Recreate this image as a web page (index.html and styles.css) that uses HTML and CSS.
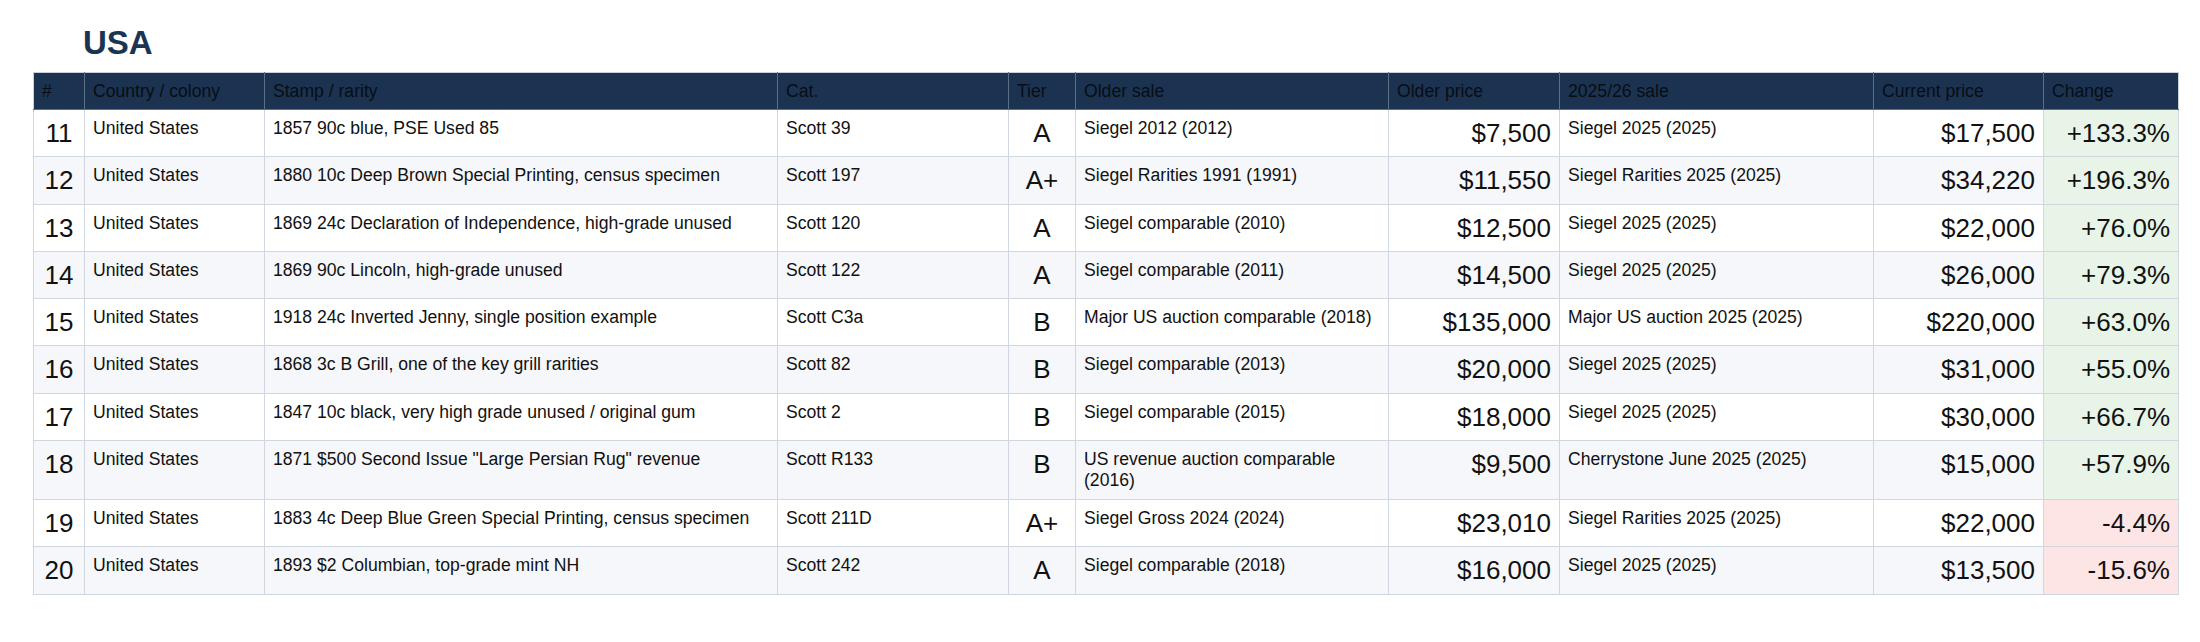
FILE: index.html
```html
<!DOCTYPE html>
<html lang="en">
<head>
<meta charset="utf-8">
<title>USA</title>
<link rel="stylesheet" href="styles.css">
</head>
<body>
<main class="page">
  <h2 class="section-title">USA</h2>
  <table class="rarities">
    <colgroup>
      <col class="c-num"><col class="c-country"><col class="c-stamp"><col class="c-cat"><col class="c-tier"><col class="c-older"><col class="c-oprice"><col class="c-new"><col class="c-cprice"><col class="c-change">
    </colgroup>
    <thead>
      <tr>
        <th>#</th><th>Country / colony</th><th>Stamp / rarity</th><th>Cat.</th><th>Tier</th><th>Older sale</th><th>Older price</th><th>2025/26 sale</th><th>Current price</th><th>Change</th>
      </tr>
    </thead>
    <tbody>
      <tr><td class="big center">11</td><td>United States</td><td>1857 90c blue, PSE Used 85</td><td>Scott 39</td><td class="big center">A</td><td>Siegel 2012 (2012)</td><td class="big right">$7,500</td><td>Siegel 2025 (2025)</td><td class="big right">$17,500</td><td class="big right up">+133.3%</td></tr>
      <tr><td class="big center">12</td><td>United States</td><td>1880 10c Deep Brown Special Printing, census specimen</td><td>Scott 197</td><td class="big center">A+</td><td>Siegel Rarities 1991 (1991)</td><td class="big right">$11,550</td><td>Siegel Rarities 2025 (2025)</td><td class="big right">$34,220</td><td class="big right up">+196.3%</td></tr>
      <tr><td class="big center">13</td><td>United States</td><td>1869 24c Declaration of Independence, high-grade unused</td><td>Scott 120</td><td class="big center">A</td><td>Siegel comparable (2010)</td><td class="big right">$12,500</td><td>Siegel 2025 (2025)</td><td class="big right">$22,000</td><td class="big right up">+76.0%</td></tr>
      <tr><td class="big center">14</td><td>United States</td><td>1869 90c Lincoln, high-grade unused</td><td>Scott 122</td><td class="big center">A</td><td>Siegel comparable (2011)</td><td class="big right">$14,500</td><td>Siegel 2025 (2025)</td><td class="big right">$26,000</td><td class="big right up">+79.3%</td></tr>
      <tr><td class="big center">15</td><td>United States</td><td>1918 24c Inverted Jenny, single position example</td><td>Scott C3a</td><td class="big center">B</td><td>Major US auction comparable (2018)</td><td class="big right">$135,000</td><td>Major US auction 2025 (2025)</td><td class="big right">$220,000</td><td class="big right up">+63.0%</td></tr>
      <tr><td class="big center">16</td><td>United States</td><td>1868 3c B Grill, one of the key grill rarities</td><td>Scott 82</td><td class="big center">B</td><td>Siegel comparable (2013)</td><td class="big right">$20,000</td><td>Siegel 2025 (2025)</td><td class="big right">$31,000</td><td class="big right up">+55.0%</td></tr>
      <tr><td class="big center">17</td><td>United States</td><td>1847 10c black, very high grade unused / original gum</td><td>Scott 2</td><td class="big center">B</td><td>Siegel comparable (2015)</td><td class="big right">$18,000</td><td>Siegel 2025 (2025)</td><td class="big right">$30,000</td><td class="big right up">+66.7%</td></tr>
      <tr><td class="big center">18</td><td>United States</td><td>1871 $500 Second Issue "Large Persian Rug" revenue</td><td>Scott R133</td><td class="big center">B</td><td>US revenue auction comparable (2016)</td><td class="big right">$9,500</td><td>Cherrystone June 2025 (2025)</td><td class="big right">$15,000</td><td class="big right up">+57.9%</td></tr>
      <tr><td class="big center">19</td><td>United States</td><td>1883 4c Deep Blue Green Special Printing, census specimen</td><td>Scott 211D</td><td class="big center">A+</td><td>Siegel Gross 2024 (2024)</td><td class="big right">$23,010</td><td>Siegel Rarities 2025 (2025)</td><td class="big right">$22,000</td><td class="big right down">-4.4%</td></tr>
      <tr><td class="big center">20</td><td>United States</td><td>1893 $2 Columbian, top-grade mint NH</td><td>Scott 242</td><td class="big center">A</td><td>Siegel comparable (2018)</td><td class="big right">$16,000</td><td>Siegel 2025 (2025)</td><td class="big right">$13,500</td><td class="big right down">-15.6%</td></tr>
    </tbody>
  </table>
</main>
</body>
</html>
```
FILE: styles.css
```css
html, body {
  margin: 0;
  padding: 0;
  background: #ffffff;
}

body {
  font-family: "Liberation Sans", Arial, sans-serif;
  color: #111111;
}

.page {
  padding: 24px 0 0 33px;
}

.section-title {
  margin: 0 0 10px 50px;
  font-size: 33px;
  line-height: 38px;
  font-weight: bold;
  color: #1b3452;
}

.rarities {
  border-collapse: collapse;
  table-layout: fixed;
  width: 2145px;
  font-size: 17.6px;
  line-height: 21px;
}

.c-num { width: 51px; }
.c-country { width: 180px; }
.c-stamp { width: 513px; }
.c-cat { width: 231px; }
.c-tier { width: 67px; }
.c-older { width: 313px; }
.c-oprice { width: 171px; }
.c-new { width: 314px; }
.c-cprice { width: 170px; }
.c-change { width: 135px; }

.rarities th {
  background: #1b3350;
  color: #080d14;
  font-weight: normal;
  text-align: left;
  padding: 8px 8px 7px;
  border: 1px solid #5d6f86;
  border-top-color: #c9d1db;
  white-space: nowrap;
}

.rarities th:first-child { border-left-color: #c9d1db; }
.rarities th:last-child { border-right-color: #c9d1db; }

.rarities td {
  padding: 8px 8px;
  border: 1px solid #d0d7e0;
  vertical-align: top;
  text-align: left;
}

.rarities tbody tr:nth-child(even) td {
  background: #f5f7fa;
}

.rarities td.big {
  font-size: 26px;
  line-height: 30.3px;
}

.rarities td.center { text-align: center; }
.rarities td.right { text-align: right; }

.rarities tbody tr td.up { background: #e7f4e7; }
.rarities tbody tr td.down { background: #fce5e4; }
```
